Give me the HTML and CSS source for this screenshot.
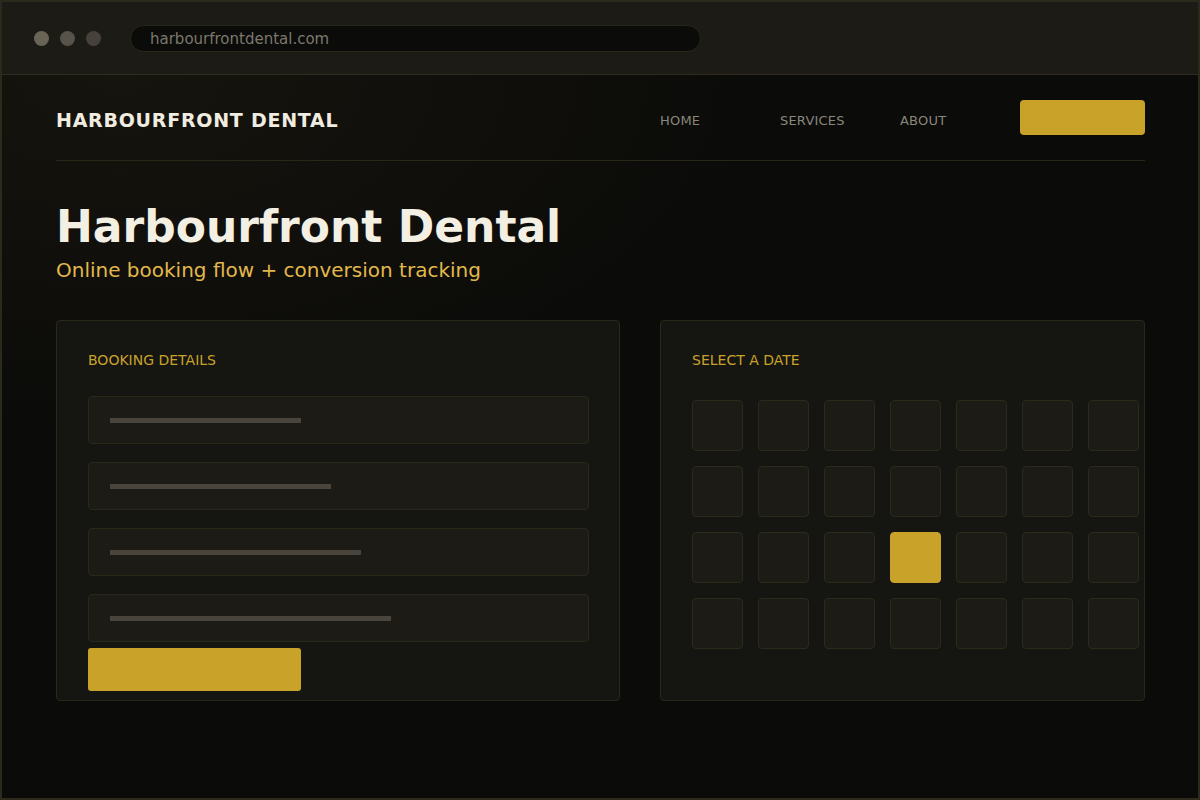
FILE: index.html
```html
<!DOCTYPE html>
<html lang="en">
<head>
<meta charset="utf-8">
<title>Harbourfront Dental</title>
<link rel="stylesheet" href="styles.css">
</head>
<body>
<div class="frame">
  <header class="chrome">
    <div class="dots">
      <span class="dot dot-1"></span>
      <span class="dot dot-2"></span>
      <span class="dot dot-3"></span>
    </div>
    <div class="address">harbourfrontdental.com</div>
  </header>
  <main class="page">
    <nav class="nav">
      <div class="logo">HARBOURFRONT DENTAL</div>
      <div class="links">
        <a class="link">HOME</a>
        <a class="link">SERVICES</a>
        <a class="link">ABOUT</a>
        <span class="cta"></span>
      </div>
    </nav>
    <section class="hero">
      <h1 class="title">Harbourfront Dental</h1>
      <p class="subtitle">Online booking flow + conversion tracking</p>
    </section>
    <section class="cards">
      <div class="card card-booking">
        <div class="card-title">BOOKING DETAILS</div>
        <div class="fields">
          <div class="field"><span class="bar" style="width:191px"></span></div>
          <div class="field"><span class="bar" style="width:221px"></span></div>
          <div class="field"><span class="bar" style="width:251px"></span></div>
          <div class="field"><span class="bar" style="width:281px"></span></div>
        </div>
        <div class="submit"></div>
      </div>
      <div class="card card-date">
        <div class="card-title">SELECT A DATE</div>
        <div class="grid">
          <span class="cell"></span><span class="cell"></span><span class="cell"></span><span class="cell"></span><span class="cell"></span><span class="cell"></span><span class="cell"></span>
          <span class="cell"></span><span class="cell"></span><span class="cell"></span><span class="cell"></span><span class="cell"></span><span class="cell"></span><span class="cell"></span>
          <span class="cell"></span><span class="cell"></span><span class="cell"></span><span class="cell selected"></span><span class="cell"></span><span class="cell"></span><span class="cell"></span>
          <span class="cell"></span><span class="cell"></span><span class="cell"></span><span class="cell"></span><span class="cell"></span><span class="cell"></span><span class="cell"></span>
        </div>
      </div>
    </section>
  </main>
</div>
</body>
</html>
```

FILE: styles.css
```css
* { box-sizing: border-box; }
html, body { margin: 0; padding: 0; }
body {
  width: 1200px;
  height: 800px;
  overflow: hidden;
  background: #0b0b09;
  font-family: "DejaVu Sans", "Liberation Sans", sans-serif;
}
.frame {
  width: 1200px;
  height: 800px;
  border: 2px solid #2b2a1d;
  background: #0b0b09;
  display: flex;
  flex-direction: column;
}
.chrome {
  height: 73px;
  flex: none;
  background: #1c1b16;
  border-bottom: 1px solid #2f2c1d;
  display: flex;
  align-items: center;
  padding-left: 32px;
}
.dots { display: flex; gap: 11px; }
.dot { width: 15px; height: 15px; border-radius: 50%; display: block; }
.dot-1 { background: #6a6457; }
.dot-2 { background: #57524a; }
.dot-3 { background: #46423b; }
.address {
  margin-left: 29px;
  width: 571px;
  height: 27px;
  border-radius: 14px;
  background: #0b0b09;
  border: 1px solid #2a281c;
  color: #7c786d;
  font-size: 15px;
  line-height: 26px;
  padding-left: 19px;
}
.page {
  flex: 1;
  padding: 0 53px 0 54px;
  background: radial-gradient(ellipse 900px 500px at 10% 0%, #16140e 0%, #0b0b09 70%);
}
.nav {
  height: 86px;
  border-bottom: 1px solid #2b2719;
  display: flex;
  align-items: center;
  justify-content: space-between;
}
.logo {
  color: #f0ece0;
  font-weight: bold;
  font-size: 19px;
  letter-spacing: 0.75px;
  padding-top: 4px;
}
.links { display: flex; align-items: center; }
.link {
  width: 120px;
  color: #8a867b;
  font-size: 13px;
  letter-spacing: 0.2px;
  padding-top: 6px;
}
.cta {
  display: block;
  width: 125px;
  height: 35px;
  border-radius: 4px;
  background: #c9a22a;
}
.hero { padding-top: 38px; }
.title {
  margin: 0;
  color: #f3efe3;
  font-size: 44px;
  font-weight: bold;
  line-height: 56px;
}
.subtitle {
  margin: 0;
  color: #e2b84c;
  font-size: 20px;
  line-height: 30px;
}
.cards {
  margin-top: 35px;
  display: flex;
  gap: 40px;
}
.card {
  height: 381px;
  background: #151512;
  border: 1px solid #2a2818;
  border-radius: 4px;
  padding: 30px 31px 0;
}
.card-booking { width: 564px; }
.card-date { width: 485px; }
.card-title {
  color: #c9a22a;
  font-size: 14px;
  line-height: 18px;
}
.fields {
  margin-top: 27px;
  display: flex;
  flex-direction: column;
  gap: 18px;
}
.field {
  width: 501px;
  height: 48px;
  background: #1c1b16;
  border: 1px solid #2a2818;
  border-radius: 4px;
  padding: 21px 0 0 21px;
}
.bar { display: block; height: 5px; background: #4a453c; }
.submit {
  margin-top: 6px;
  width: 213px;
  height: 43px;
  border-radius: 3px;
  background: #c9a22a;
}
.grid {
  margin-top: 31px;
  display: grid;
  grid-template-columns: repeat(7, 51px);
  gap: 15px;
}
.cell {
  display: block;
  height: 51px;
  background: #1c1b16;
  border: 1px solid #2c2a1b;
  border-radius: 4px;
}
.cell.selected { background: #c9a22a; border-color: #c9a22a; }
```
